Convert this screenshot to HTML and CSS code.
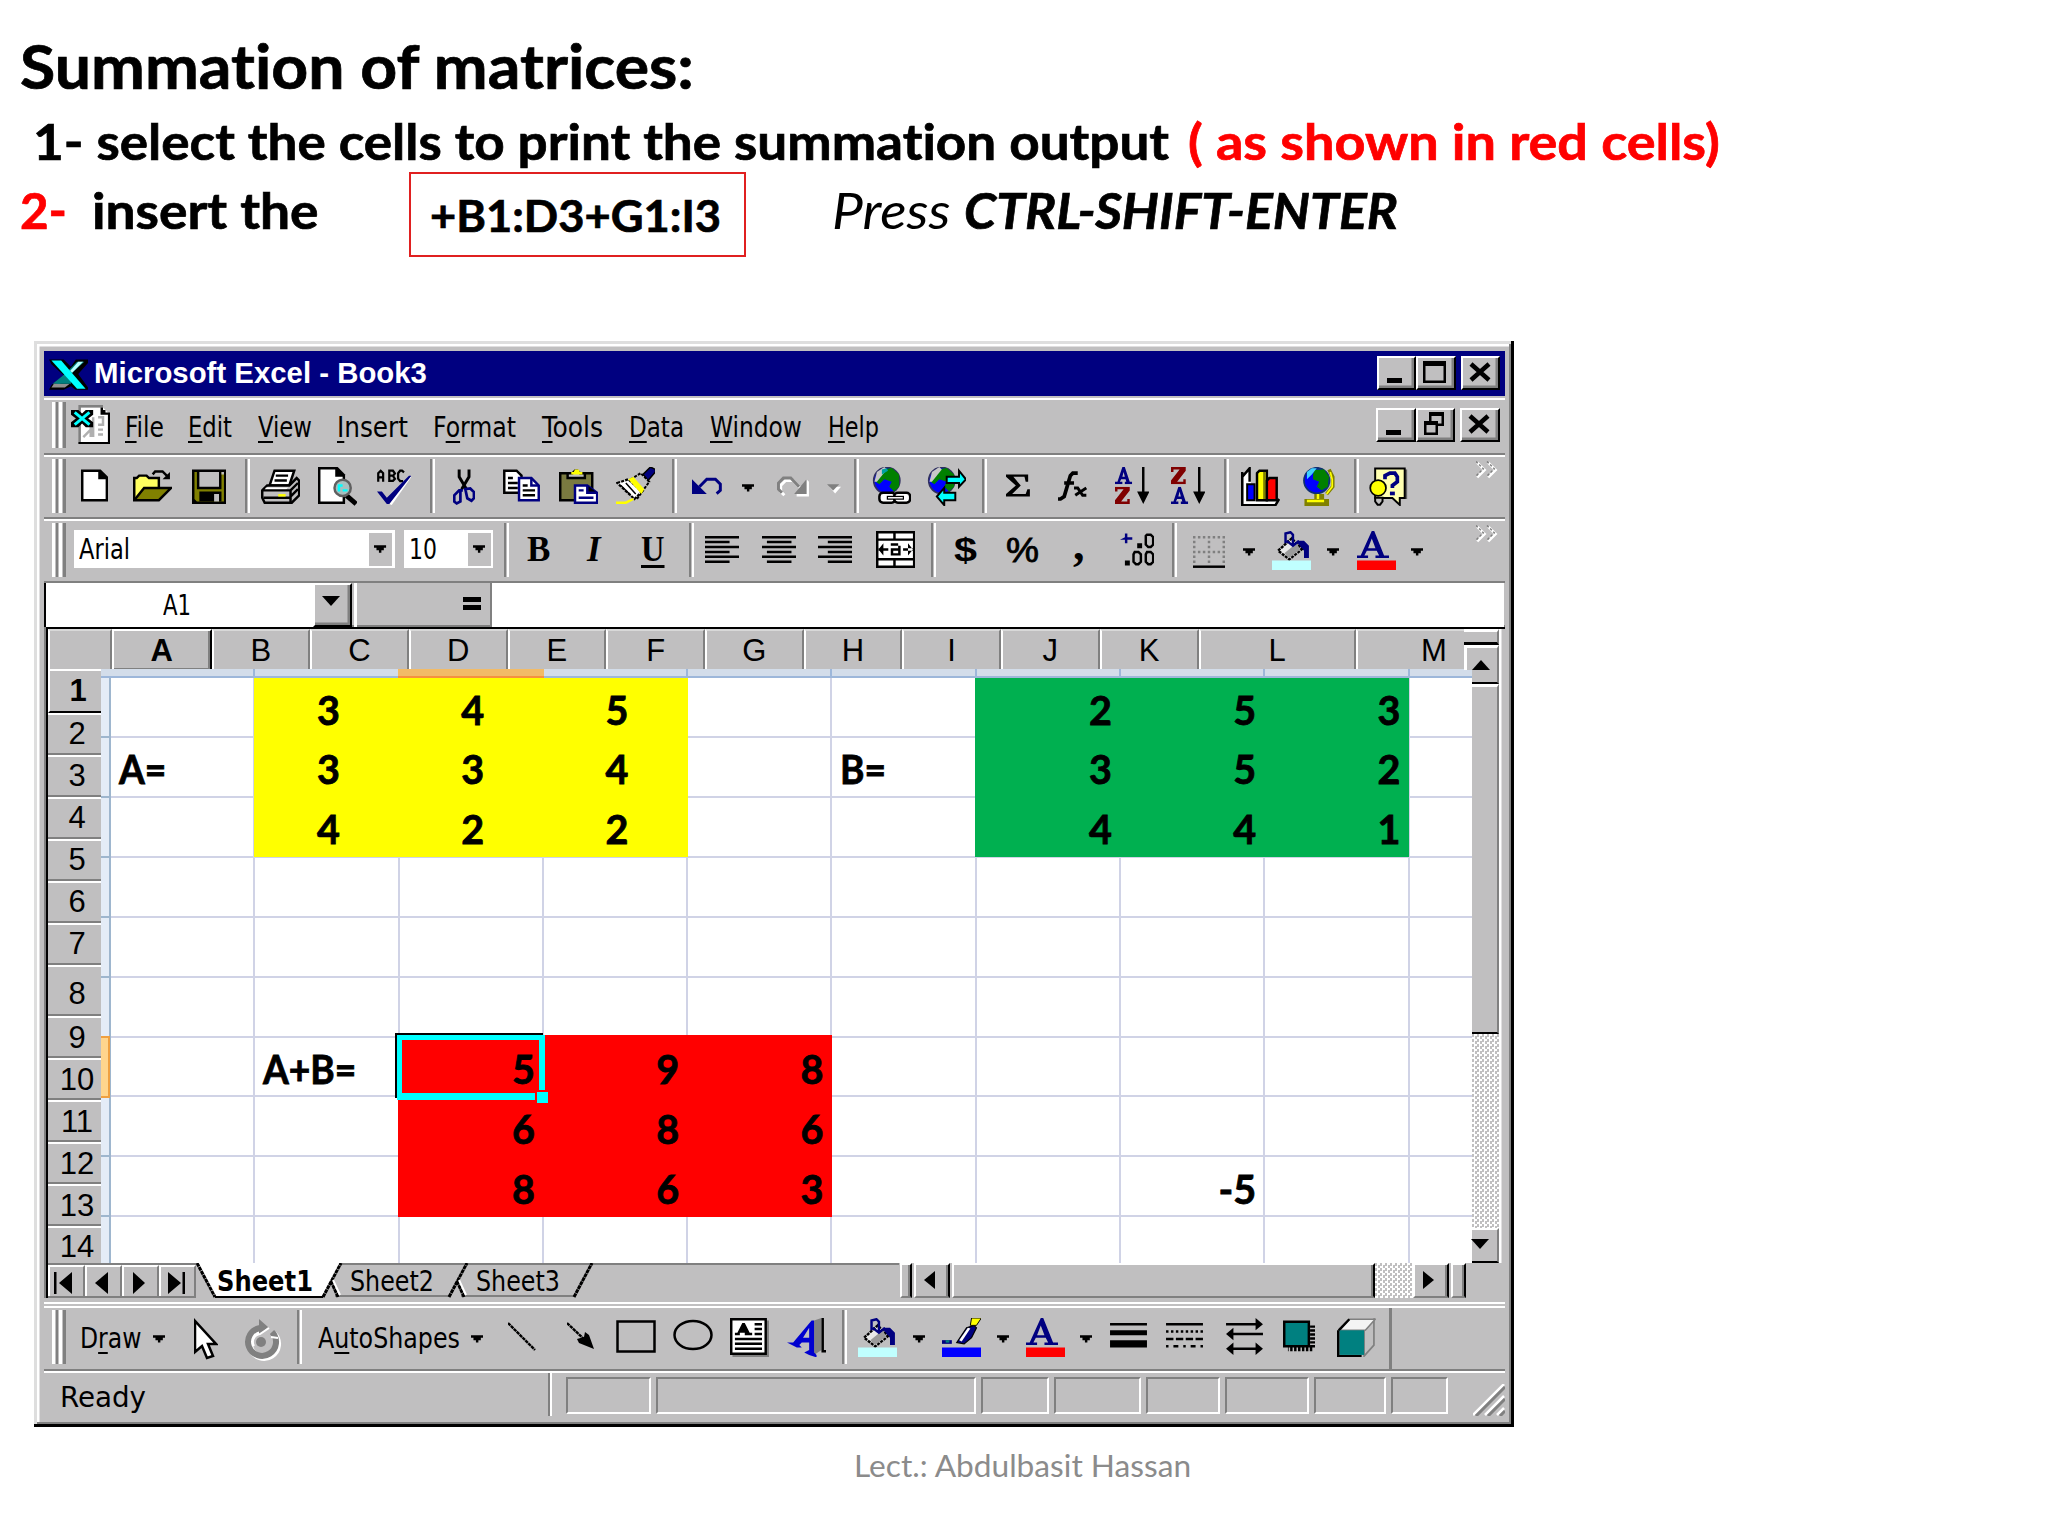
FILE: index.html
```html
<!DOCTYPE html>
<html lang="en">
<head>
<meta charset="utf-8">
<title>Summation of matrices</title>
<link rel="stylesheet" href="styles.css">
</head>
<body>
<svg width="0" height="0" class="defs">
  <defs>
    <symbol id="drop" viewBox="0 0 5 16"><path d="M0 7h5v1h-1v1h-1v1h-1v-1h-1v-1h-1z"/></symbol>
    <symbol id="chev" viewBox="0 0 9 7"><path fill="none" stroke="#fff" stroke-width="1.1" d="M.5 .5l3 3-3 3M5 .5l3 3-3 3"/><path fill="none" stroke="#808080" stroke-width=".6" stroke-dasharray="1 .8" d="M0 0l3 3-3 3M4.500 0l3 3-3 3"/></symbol>
    <symbol id="bucket" viewBox="0 0 16 16">
      <path fill="#000080" d="M10 4h3l2 2v5h-2V8l-2-2z"/>
      <path fill="#e8e8e8" stroke="#000" stroke-dasharray="1.200 .4" d="M2.500 8l5.500-5 4 4.500-5 4z"/>
      <path fill="#9a9a9a" d="M5 9l5-4 1.500 2.500-4.500 3.500z"/>
      <path fill="none" stroke="#000080" d="M5.500 5V1l2-.5 1 1V6M6 4l2.500 2L11 4"/>
      <path fill="#c0ffff" d="M0 12h16v4H0z"/>
    </symbol>
    <symbol id="fontcolor" viewBox="0 0 16 16">
      <path fill="#000080" fill-rule="evenodd" d="M6 0h1l4 10h2v1H7.500v-1H9L8 8H4l-1 2h1.500v1H0v-1h1.500zM6 3L4.500 7h3z"/>
      <path fill="#f00" d="M0 12h16v4H0z"/>
    </symbol>
    <symbol id="az-a" viewBox="0 0 7 7"><path fill="#000080" fill-rule="evenodd" d="M3 0h1l2 6h1v1H4V6h.6L4.300 5H2.500L2 6h1v1H0V6h1zM3.500 2L3 4h1z"/></symbol>
    <symbol id="az-z" viewBox="0 0 7 7"><path fill="#800000" d="M0 0h6v1.500L2.500 6H5V5h1v2H0V5.500L3.500 1H1v1H0z"/></symbol>
  </defs>
</svg>

<main class="slide">
  <header class="notes">
    <h1><span class="fit h-title">Summation of matrices:</span></h1>
    <p class="step-one"><span class="fit h-one">1- select the cells to print the summation output</span><span class="fit h-red">( as shown in red cells)</span></p>
    <p class="step-two">
      <span class="fit h-num">2-</span>
      <span class="fit h-ins">insert the</span>
      <span class="formula"><span class="fit h-formula">+B1:D3+G1:I3</span></span>
      <i class="fit h-press">Press</i>
      <i class="fit h-keys">CTRL-SHIFT-ENTER</i>
    </p>
  </header>

  <section class="window">
    <div class="titlebar">
      <svg class="app-icon" width="39" height="32" viewBox="0 0 16 13"><path fill="#000" d="M0 .5h6l3 3 2-3h5v1.500l-4 4.500 4 5.500v1h-5L9 11.500l-3 1.500H0l1-2 5-4-5-4.500z"/><path fill="#008080" d="M10.500 2.500l1-1h3L4.500 10.500H1.500l5-4z"/><path fill="#909090" d="M2 10.500h6.500l-2 1.500H1z"/><path fill="#008080" d="M5 8l2-1.500L9 9v1.500H3z"/><path fill="#0ff" d="M1 1h4l10 11.500h-3.500z"/><path fill="#b8ffff" d="M12 1.500h2L9.500 6l-.8-.8z"/></svg>
      <span class="fit app-name">Microsoft Excel - Book3</span>
      <div class="controls">
        <b><svg width="34" height="28" viewBox="0 0 34 28"><path d="M8 20h15v5H8z"/></svg></b>
        <b><svg width="34" height="28" viewBox="0 0 34 28"><path fill-rule="evenodd" d="M5 3h23v22H5zM7.500 8v14.500h18V8z"/></svg></b>
        <b class="close"><svg width="34" height="28" viewBox="0 0 34 28"><path fill="none" stroke="#000" stroke-width="4.500" d="M8 6l18 16M26 6L8 22"/></svg></b>
      </div>
    </div>

    <nav class="menubar">
      <i class="grip"></i>
      <svg class="doc-icon" width="39.400" height="39.400" viewBox="0 0 16 16"><path fill="#fff" d="M4 1h9l2 2v12H4z"/><path fill="#808080" d="M3 0h10v1H4v14H3z"/><path d="M12 1h1v1h1v1h2v13H3v-1h12V4h-3z"/><path fill="none" stroke="#b0b0b0" d="M6 8h2v5M9 5v8M11 5h2v3h-2M11 10h2M11 12h2M5 13l3-3"/><path d="M0 2h3l1.500 1.500L6 2h3v2L7 5.500 9 7v2H6L4.500 7.500 3 9H0V7l2-1.500L0 4z"/><path fill="none" stroke="#0ff" stroke-width="1.200" d="M1.500 3l6 5M7.500 3l-6 5"/></svg>
      <span class="fit m1"><u>F</u>ile</span>
      <span class="fit m2"><u>E</u>dit</span>
      <span class="fit m3"><u>V</u>iew</span>
      <span class="fit m4"><u>I</u>nsert</span>
      <span class="fit m5">F<u>o</u>rmat</span>
      <span class="fit m6"><u>T</u>ools</span>
      <span class="fit m7"><u>D</u>ata</span>
      <span class="fit m8"><u>W</u>indow</span>
      <span class="fit m9"><u>H</u>elp</span>
      <div class="controls">
        <b><svg width="34" height="28" viewBox="0 0 34 28"><path d="M8 20h15v5H8z"/></svg></b>
        <b><svg width="34" height="28" viewBox="0 0 34 28"><path fill-rule="evenodd" d="M11 2h15v14h-6v9H6V11h5zM13.500 6v5H20v2.500h3.500V6zM8.500 15v7.500h9V15z"/></svg></b>
        <b class="close"><svg width="34" height="28" viewBox="0 0 34 28"><path fill="none" stroke="#000" stroke-width="4.500" d="M8 6l18 16M26 6L8 22"/></svg></b>
      </div>
    </nav>

    <div class="bar standard">
      <i class="grip"></i>
      <svg width="27.100" height="39.400" viewBox="0 0 11 16"><path d="M0 1h8l3 3v10H0z"/><path fill="#fff" d="M1 2h6v3h3v8H1z"/></svg>
      <svg width="39.400" height="39.400" viewBox="0 0 16 16"><path fill="none" stroke="#000" d="M8 3l1-1.200h3l2 2"/><path d="M15 2v3h-3z"/><path fill="#ffff60" stroke="#000" d="M.5 13.500v-9h1l1-1h3l1 1h4v4"/><path fill="#808000" stroke="#000" d="M.5 13.500l4-5h11l-5 5z"/></svg>
      <svg width="34.400" height="39.400" viewBox="0 0 14 16"><path d="M0 1h14v14H0z"/><path fill="#808000" d="M1 2h12v12H2l-1-1z"/><path fill="#000" d="M2 2h10v7H2zM3 10h9v4H3z"/><path fill="#c0bfc0" d="M3 2h8v6H3zM9 11h2v3H9zM12 2h1v1h-1z"/></svg>
      <i class="sep"></i>
      <svg width="39.400" height="39.400" viewBox="0 0 16 16"><path fill="#fff" stroke="#000" d="M3.500 7.500l2-6h8l-2 6z"/><path stroke="#000" d="M6 3.500h5M5.500 5.500h5"/><path fill="#c0bfc0" stroke="#000" d="M.5 9.500l2-2h9l3-3 1 1v6l-3 3h-11l-1-2z"/><path fill="#fff" d="M2 8.300h9l-1 1H1.500z"/><path fill="none" stroke="#000" d="M.5 9.500h11.500v5M1 12.500h11M12 9.500l3-3M12 12l3-3"/><path fill="#ff0" d="M7 11h3v1H7z"/></svg>
      <svg width="39.400" height="39.400" viewBox="0 0 16 16"><path d="M0 0h8l3 3v12H0z"/><path fill="#fff" d="M1 1h6v3h3v10H1z"/><path stroke="#000" stroke-width="2" d="M11.500 11.500l4 3.500"/><circle cx="10" cy="8.500" r="3.300" fill="#a8c0c0" stroke="#606060"/><path fill="#0ff" d="M8 7h2v1H9v2H8zM10 9h2v1h-2z"/></svg>
      <svg width="34.400" height="39.400" viewBox="0 0 14 16"><path fill="none" stroke="#000" stroke-width=".9" d="M.5 6V2.500l1-1 1 1V6M.5 4.200h2M5 1.500V5.600h1.500l.8-.8-.8-1.200.8-1-.8-1.100zM5 3.500h1.500M11 2.200l-.8-.7h-.8l-.8 1v2.200l.8 1h1.200"/><path fill="#fff" d="M14 4L6 15.500l-1-.5L13 4z"/><path fill="#000080" d="M0 10h2l2 2.500L13 3.500h1L5 15H4z"/></svg>
      <i class="sep"></i>
      <svg width="22.200" height="39.400" viewBox="0 0 9 16"><path fill="none" stroke="#000" stroke-width="1.200" d="M2.500 1v3l3 5M6.500 1v3l-3 5"/><path fill="none" stroke="#000080" stroke-width="1.100" d="M4 9.500H2.500l-2 2v2.500l1 .8 1.500-.8V9.500M5 9l2-.3 1.500 1.500v2.500l-1 1-1.700-1z"/></svg>
      <svg width="37" height="39.400" viewBox="0 0 15 16"><path fill="#fff" stroke="#000" d="M.5 1.500h5l2 2v7h-7z"/><path stroke="#000" d="M2 4.500h2M2 6.500h4M2 8.500h4"/><path fill="#fff" stroke="#000080" d="M6.500 4.500h5l3 3v6h-8z"/><path fill="none" stroke="#000080" d="M11.500 4.500v3h3"/><path stroke="#000" d="M8 7.500h2M8 9.500h5M8 11.500h5"/></svg>
      <svg width="39.400" height="39.400" viewBox="0 0 16 16"><path fill="#7a7a40" stroke="#000" d="M.5 2.500h13v11H.5z"/><path fill="#c0bfc0" stroke="#000" d="M3.500 4.500v-2h2l1-1h1l1 1h2v2z"/><path fill="#ff0" d="M5 2h1l.5-1h1.500l.5 1h1v1H5z"/><path fill="#fff" stroke="#000080" d="M6.500 7.500h5l4 3v4h-9z"/><path stroke="#000080" d="M8 9.500h2M8 12.500h6M11.500 7.500v3h4"/></svg>
      <svg width="39.400" height="39.400" viewBox="0 0 16 16"><path fill="#000080" stroke="#000" stroke-width=".6" d="M11 3l3-3 2 1v1l-3 3.500z"/><path fill="#c0bfc0" stroke="#000" stroke-width=".8" stroke-dasharray="1.200 .5" d="M6 5l4-2.500 3.500 3.500-5 7z"/><path fill="#fff" stroke="#000" stroke-dasharray="1.200 .5" stroke-width=".9" d="M.5 6.500L5 5l5.500 5-3 3z"/><path fill="#ff0" d="M5 5l2-1 4.500 5-1.200 2z"/><path fill="none" stroke="#000" stroke-width=".6" d="M2 7.500l4 4M4 6.500l4 4.500"/><path fill="none" stroke="#ff0" d="M0 14.500h4l3-1.500"/></svg>
      <i class="sep"></i>
      <svg width="29.600" height="39.400" viewBox="0 0 12 16"><path fill="#000080" d="M0 5v6h6z"/><path fill="none" stroke="#000080" stroke-width="1.200" d="M3 8l3-3h3.500l2 2v2.500l-1.500 1.300"/></svg>
      <svg width="12.300" height="39.400"><use href="#drop"/></svg>
      <svg width="34.400" height="39.400" viewBox="0 0 14 16"><path fill="#fff" d="M13 6v6H8v-1h4V5z"/><path fill="none" stroke="#fff" stroke-width="1.200" d="M3 11.500L1.500 10V7.500l2-2h3l3 3"/><path fill="#808080" d="M12 5v6H7z"/><path fill="none" stroke="#808080" stroke-width="1.200" d="M2 10.500L.6 9V6.500l2-2h3L9 8"/></svg>
      <svg width="14" height="39.400" viewBox="0 0 5.700 16"><path fill="#fff" d="M1 8h4.700L3.300 10.800z"/><path fill="#808080" d="M0 7h5L2.500 9.500z"/></svg>
      <i class="sep"></i>
      <svg width="39.400" height="39.400" viewBox="0 0 16 16"><circle cx="6" cy="5.500" r="5.300" fill="#00f" stroke="#303060" stroke-width=".7"/><path fill="#008000" d="M4 1l4-.6 3 2.600v5L9 10l-2-2 1-2-3-1-2 2-1.500-1z"/><path fill="#c8c8c8" d="M2 2l3-2 1 1-4 5H1z"/><path fill="#00a0a0" d="M4 1l2-.5.5 1L4 3z"/><rect x="3" y="10.500" width="6.500" height="4" rx="1.500" fill="#fff" stroke="#000"/><rect x="9" y="10.500" width="6.500" height="4" rx="1.500" fill="#fff" stroke="#000"/><path stroke="#000" stroke-width="1.600" d="M6 12.500h7"/><path stroke="#fff" stroke-width=".6" d="M6.500 12.500h6"/></svg>
      <svg width="39.400" height="39.400" viewBox="0 0 16 16"><circle cx="6" cy="5.500" r="5.300" fill="#00f" stroke="#303060" stroke-width=".7"/><path fill="#008000" d="M4 1l4-.6 3 2.600v5L9 10l-2-2 1-2-3-1-2 2-1.500-1z"/><path fill="#c8c8c8" d="M2 2l3-2 1 1-4 5H1z"/><path fill="#0ff" stroke="#000" stroke-width=".8" d="M8 4h5V1.500L15.800 5 13 8V6.500H8z"/><path fill="#0ff" stroke="#000" stroke-width=".8" d="M11.500 10.500H7V8.500L4 12l3 3.500v-2h4.500z"/></svg>
      <i class="sep"></i>
      <svg width="24" height="39.400" viewBox="0 0 9.750 16"><path d="M0 3h9v3H8L7.500 4H3l3 3.500L2.500 11H8l.7-2h1v3H0v-1l4-3.500L0 4z"/></svg>
      <svg width="29.600" height="39.400" viewBox="0 0 12 16"><path fill="none" stroke="#000" stroke-width="1.500" d="M0 13h1l1.500-1L5 3.500 6 2.500h2M2.500 6.500h4"/><path fill="none" stroke="#000" stroke-width="1.200" d="M6.500 8.500h1.500l2 3h1.500M11.500 8.500L7 11.500"/></svg>
      <svg width="34.400" height="39.400" viewBox="0 0 14 16"><use href="#az-a" width="7" height="7"/><use href="#az-z" y="8" width="7" height="7"/><path d="M11 0h1v10h2l-2.500 5L9 10h2z"/></svg>
      <svg width="34.400" height="39.400" viewBox="0 0 14 16"><use href="#az-z" width="7" height="7"/><use href="#az-a" y="8" width="7" height="7"/><path d="M11 0h1v10h2l-2.500 5L9 10h2z"/></svg>
      <i class="sep"></i>
      <svg width="39.400" height="39.400" viewBox="0 0 16 16"><path fill="#fff" d="M1 4l3-3v12h12l-2 2H1z"/><path fill="none" stroke="#000" d="M.5 2v13.500H14l1.500-2.500M.5 4L3.500.5V6"/><path fill="#00f" stroke="#000" stroke-width=".8" d="M2.500 7h3v6.500h-3z"/><path fill="#ff0" stroke="#000" d="M6.500 2.500l1-1h3v12h-4z"/><path fill="#808000" d="M9 2h1v11H9z"/><path fill="#f00" stroke="#000" d="M10.500 5.500l1-1h3v9h-4z"/></svg>
      <svg width="34.400" height="39.400" viewBox="0 0 14 16"><path fill="none" stroke="#808000" stroke-width="1.500" d="M11 1l1.500 3v4L10 11"/><path fill="none" stroke="#ff0" stroke-width=".7" d="M11.500 2l.8 3v3L10 11"/><circle cx="6" cy="5.500" r="5.200" fill="#00f" stroke="#103070" stroke-width=".7"/><path fill="#008000" d="M5 1l4 0 2 3-.5 4L8 9.500 6 8l1-2-2.500-1V3z"/><path fill="#40d0ff" d="M2 2l2-1.500h2L4 3 2 5z"/><path fill="#808000" d="M5 11h4v2h2v3H1v-3h4z"/><path fill="#ff0" d="M2 13.300h7v1H2zM6 11h1v2H6z"/></svg>
      <i class="sep"></i>
      <svg width="39.400" height="39.400" viewBox="0 0 16 16"><path fill="#606060" d="M14 1h1.500v12H14z"/><path fill="#ffffb0" stroke="#000" stroke-width=".8" d="M2.500.6h12v12h-2v2.800l-3-2.800h-7z"/><path fill="none" stroke="#000080" stroke-width="1.500" d="M6.500 5V3.500l2-1h2l1 1.500v2l-2 1.500v1"/><path fill="#000080" d="M8.500 10h2v1.500h-2z"/><circle cx="3.700" cy="8.500" r="3.200" fill="#ff0" stroke="#000" stroke-width=".7"/><path fill="#c0bfc0" stroke="#000" stroke-width=".8" d="M2.500 12.500h3v1.500l-1 1.300h-1l-1-1.300z"/></svg>
      <svg class="more" width="22" height="18"><use href="#chev"/></svg>
    </div>

    <div class="bar format">
      <i class="grip"></i>
      <div class="combo font-name"><span class="fit f-arial">Arial</span><em><svg width="12.300" height="33" viewBox="0 2 5 13.400"><use href="#drop" width="5" height="16"/></svg></em></div>
      <div class="combo font-size"><span class="fit f-ten">10</span><em><svg width="12.300" height="33" viewBox="0 2 5 13.400"><use href="#drop" width="5" height="16"/></svg></em></div>
      <i class="sep"></i>
      <b class="glyph">B</b>
      <b class="glyph italic">I</b>
      <b class="glyph under">U</b>
      <i class="sep"></i>
      <svg width="34.400" height="39.400" viewBox="0 0 14 16"><path d="M0 2h14v1H0zM0 4h10v1H0zM0 6h14v1H0zM0 8h10v1H0zM0 10h14v1H0zM0 12h10v1H0z"/></svg>
      <svg width="34.400" height="39.400" viewBox="0 0 14 16"><path d="M0 2h14v1H0zM2 4h10v1H2zM0 6h14v1H0zM2 8h10v1H2zM0 10h14v1H0zM2 12h10v1H2z"/></svg>
      <svg width="34.400" height="39.400" viewBox="0 0 14 16"><path d="M0 2h14v1H0zM4 4h10v1H4zM0 6h14v1H0zM4 8h10v1H4zM0 10h14v1H0zM4 12h10v1H4z"/></svg>
      <svg width="39.400" height="39.400" viewBox="0 0 16 16"><path d="M0 0h16v15H0z"/><path fill="#fff" d="M1 1h6v2H1zM8 1h7v2H8zM1 4h14v7H1zM1 12h6v2H1zM8 12h7v2H8z"/><path d="M1 7h4v1H1zM3 5v5L1 7.500zM11 7h4v1h-4zM13 5v5l2-2.500z"/><path fill-rule="evenodd" d="M6 5h3v1H6zM9 6h1v4H6V7h3zM7 8v1h2V8z"/></svg>
      <i class="sep"></i>
      <b class="glyph sans dollar">$</b>
      <b class="glyph sans percent">%</b>
      <b class="glyph comma">,</b>
      <svg width="34.400" height="39.400" viewBox="0 0 14 16"><path fill="#000080" d="M2 1h1v1.500h2v1H3V5H2V3.500H0L2 2.500z"/><path d="M7 5h2v2H7zM2 12h2v2H2z"/><path fill="none" stroke="#000" d="M10.500 2l.5-.5h1.500l1 1v3l-1 1h-1l-1-1zM5.500 9.500l.5-1h1.500l1 1v3l-1 1h-1l-1-1zM10.500 9.500l.5-1h1.500l1 1v3l-1 1h-1l-1-1z"/></svg>
      <i class="sep"></i>
      <svg width="32" height="39.400" viewBox="0 0 13 16"><path fill="none" stroke="#808080" stroke-dasharray="1 1" d="M0 2.500h13M0 8.500h13M.5 2v12M6.500 2v12M12.500 2v12"/><path d="M0 14h13v1H0z"/></svg>
      <svg width="12.300" height="39.400"><use href="#drop"/></svg>
      <svg width="39.400" height="39.400"><use href="#bucket"/></svg>
      <svg width="12.300" height="39.400"><use href="#drop"/></svg>
      <svg width="39.400" height="39.400"><use href="#fontcolor"/></svg>
      <svg width="12.300" height="39.400"><use href="#drop"/></svg>
      <svg class="more" width="22" height="18"><use href="#chev"/></svg>
    </div>

    <div class="formula-bar">
      <div class="name-box"><span class="fit f-a1">A1</span></div>
      <div class="name-drop"><svg width="18" height="10" viewBox="0 0 18 10"><path d="M0 0h18l-9 10z"/></svg></div>
      <div class="equals"><i></i></div>
      <div class="entry"></div>
    </div>

    <div class="book">
      <div class="book-main">
        <div class="sheet-side">
          <div class="col-heads">
            <span></span><span class="on">A</span><span>B</span><span>C</span><span>D</span><span>E</span><span>F</span><span>G</span><span>H</span><span>I</span><span>J</span><span>K</span><span>L</span><span class="last">M</span>
          </div>
          <div class="sheet-row">
            <div class="row-heads">
              <span class="on">1</span><span>2</span><span>3</span><span>4</span><span>5</span><span>6</span><span>7</span><span class="tall">8</span><span>9</span><span>10</span><span>11</span><span>12</span><span>13</span><span>14</span>
            </div>
            <div class="sheet">
              <div class="top-strip"><i></i></div>
              <div class="left-strip"><i></i></div>
              <div class="cells">
                <span class="label a">A=</span>
                <div class="range yellow"><span>3</span><span>4</span><span>5</span><span>3</span><span>3</span><span>4</span><span>4</span><span>2</span><span>2</span></div>
                <span class="label b">B=</span>
                <div class="range green"><span>2</span><span>5</span><span>3</span><span>3</span><span>5</span><span>2</span><span>4</span><span>4</span><span>1</span></div>
                <span class="label sum">A+B=</span>
                <div class="range red"><span>5</span><span>9</span><span>8</span><span>6</span><span>8</span><span>6</span><span>8</span><span>6</span><span>3</span></div>
                <span class="label minus">-5</span>
                <div class="selection"><i></i></div>
              </div>
            </div>
          </div>
        </div>
        <div class="vscroll">
          <div class="vsplit"></div>
          <div class="vbtn up"><svg width="18" height="10" viewBox="0 0 18 10"><path d="M0 10h18L9 0z"/></svg></div>
          <div class="vthumb"></div>
          <div class="dither"></div>
          <div class="vbtn down"><svg width="18" height="10" viewBox="0 0 18 10"><path d="M0 0h18l-9 10z"/></svg></div>
        </div>
      </div>
      <div class="tabs">
        <div class="tab-nav">
          <b><svg width="18" height="22" viewBox="0 0 18 22"><path d="M0 0h2.500v22H0zM18 0v22L5 11z"/></svg></b>
          <b><svg width="18" height="22" viewBox="0 0 18 22"><path d="M17 0v22L4 11z"/></svg></b>
          <b><svg width="18" height="22" viewBox="0 0 18 22"><path d="M5 0v22l12-11z"/></svg></b>
          <b><svg width="20" height="22" viewBox="0 0 20 22"><path d="M3 0v22l13-11zM17.500 0H20v22h-2.500z"/></svg></b>
        </div>
        <div class="tab-list">
          <svg class="tab-edges" width="703" height="35" viewBox="197 0 703 35"><path fill="#fff" d="M197 0l19 34h108l18-34z"/><path fill="none" stroke="#808080" stroke-width="2" d="M342 1h558M336 33h114M462 33h113"/><path fill="none" stroke="#000" stroke-width="3" stroke-dasharray="4 .5" d="M198 0l18 34M324 34l18-34M332 18l7 16M450 34l18-34M458 18l7 16M575 34l18-34"/><path stroke="#000" stroke-width="2" d="M216 34h108"/><path fill="none" stroke="#fff" stroke-width="2" d="M334 17l7 15M460 17l7 15"/></svg>
          <span class="fit tab-one">Sheet1</span>
          <span class="fit tab-two">Sheet2</span>
          <span class="fit tab-three">Sheet3</span>
        </div>
        <div class="hscroll">
          <i class="hsplit"></i>
          <i class="hbtn"><svg width="11" height="18" viewBox="0 0 11 18"><path d="M11 0v18L0 9z"/></svg></i>
          <i class="hthumb"></i>
          <i class="dither"></i>
          <i class="hbtn"><svg width="11" height="18" viewBox="0 0 11 18"><path d="M0 0v18l11-9z"/></svg></i>
          <i class="hend"></i>
        </div>
      </div>
    </div>
    <div class="gap"></div>

    <div class="bar drawing">
      <i class="grip"></i>
      <span class="fit d-draw">D<u>r</u>aw</span>
      <svg width="12.300" height="39.400"><use href="#drop"/></svg>
      <svg width="24" height="44" viewBox="0 0 24 44"><path fill="#fff" stroke="#000" stroke-width="2.500" d="M1 3v31l7-6 5 12 6-2-5-12h8z"/></svg>
      <svg width="39" height="44" viewBox="0 0 39 44"><path fill="none" stroke="#fff" stroke-width="6" d="M31 16a14 14 0 1 1-12-4"/><path fill="none" stroke="#808080" stroke-width="6" d="M29 14a14 14 0 1 1-12-4"/><path fill="#808080" d="M16 1l9 8-9 8z"/><path fill="none" stroke="#fff" stroke-width="2" d="M11 28a8 8 0 0 1 6-12l9-6M28 19l7 1"/><circle cx="18" cy="24" r="5" fill="#808080"/></svg>
      <i class="sep"></i>
      <span class="fit d-auto">A<u>u</u>toShapes</span>
      <svg width="12.300" height="39.400"><use href="#drop"/></svg>
      <svg width="29" height="39.400" viewBox="0 0 29 39.400"><path stroke="#000" stroke-width="2.400" stroke-dasharray="3.500 .6" d="M0 5l27 27"/></svg>
      <svg width="29" height="39.400" viewBox="0 0 29 39.400"><path stroke="#000" stroke-width="2.400" stroke-dasharray="3.500 .6" d="M0 5l20 19"/><path d="M18 14l4 3 5 14-15-6-2-4 7-2z"/></svg>
      <svg width="40" height="39.400" viewBox="0 0 40 39.400"><path fill="none" stroke="#000" stroke-width="2.500" d="M1.500 3.500h37v30h-37z"/></svg>
      <svg width="40" height="39.400" viewBox="0 0 40 39.400"><ellipse cx="20" cy="17" rx="18.500" ry="14" fill="none" stroke="#000" stroke-width="2.500"/></svg>
      <svg width="39.400" height="39.400" viewBox="0 0 16 16"><path fill="#808080" d="M1 1h15v15H1z"/><path d="M0 0h15v15H0z"/><path fill="#fff" d="M1 1h13v13H1z"/><path fill-rule="evenodd" d="M5 2h1l2 4h1v1H6V6H4v1H2V6h1zM10 2h3v1h-3zM10 4h3v1h-3zM10 6h3v1h-3zM2 8h11v1H2zM2 10h11v1H2zM2 12h11v1H2z"/></svg>
      <svg width="39.400" height="39.400" viewBox="0 0 16 16"><path fill="#808080" d="M11 1l3-1v13l-3 2z"/><path d="M14 0h1v13h1v1h-2z"/><path fill="#0000d0" fill-rule="evenodd" d="M10 1h1v13l1 1v1l-3-1-2-1 2-1v-3H6l-1 1 1 1H4l-4-2h2.500zM9 4L6.500 8H9z"/></svg>
      <i class="sep"></i>
      <svg width="39.400" height="39.400"><use href="#bucket"/></svg>
      <svg width="12.300" height="39.400"><use href="#drop"/></svg>
      <svg width="39.400" height="39.400" viewBox="0 0 16 16"><path fill="#000080" stroke="#000" stroke-width=".5" d="M6 10l4-6 3-1 1 1-2 4-3 2.500z"/><path fill="#fff" d="M7 9l3.500-5 1 .3L8 9.500z"/><path fill="#ff0" stroke="#000" stroke-width=".4" d="M12 0h4l-2 3h-2.500z"/><path fill="#000080" d="M0 9h4v1.500H0z"/><path fill="#008080" d="M1.500 9H3v1H1.500z"/><path fill="#00f" d="M0 12h16v4H0z"/></svg>
      <svg width="12.300" height="39.400"><use href="#drop"/></svg>
      <svg width="39.400" height="39.400"><use href="#fontcolor"/></svg>
      <svg width="12.300" height="39.400"><use href="#drop"/></svg>
      <svg width="37" height="39.400" viewBox="0 0 15 16"><path d="M0 2h15v1H0zM0 5h15v2H0zM0 9h15v3H0z"/></svg>
      <svg width="37" height="39.400" viewBox="0 0 15 16"><path d="M0 2h15v1H0z"/><path fill="none" stroke="#000" stroke-dasharray="1 1" d="M0 5.500h15"/><path fill="none" stroke="#000" stroke-dasharray="3 1" d="M0 8.500h15"/><path fill="none" stroke="#000" stroke-dasharray="1 2 2 2" d="M0 11.500h15"/></svg>
      <svg width="37" height="39.400" viewBox="0 0 15 16"><path d="M0 2h12V0l3 2.500-3 2.500V3H0zM15 6H3V4L0 6.500 3 9V7h12zM3 12h9v-2l3 2.500-3 2.500v-2H3v2l-3-2.500L3 10z"/></svg>
      <svg width="32" height="39.400" viewBox="0 0 13 16"><path fill="none" stroke="#000" stroke-width="2" stroke-dasharray="1 .6" d="M12 3v9.500H2"/><path fill="#008080" stroke="#000" d="M.5 1.500h10v10H.5z"/></svg>
      <svg width="39.400" height="39.400" viewBox="0 0 16 16"><path fill="#c0bfc0" stroke="#808080" stroke-width=".7" d="M11 5l4-4.500V11l-4 4.500z"/><path fill="#f4f4f4" stroke="#808080" stroke-width=".6" d="M1 5l4-4.500h10.500L11.500 5z"/><path stroke="#000" d="M.7 5L5 .5"/><path fill="#008080" d="M1 5h10v10H1z"/><path d="M0 5h1v10h9v1H0z"/></svg>
      <i class="bar-end"></i>
    </div>

    <footer class="status">
      <span class="fit s-ready">Ready</span>
      <i class="pane-end"></i>
      <i class="pane"></i><i class="pane"></i><i class="pane"></i><i class="pane"></i><i class="pane"></i><i class="pane"></i><i class="pane"></i><i class="pane"></i>
      <svg width="32" height="32" viewBox="0 0 32 32"><path stroke="#fff" stroke-width="2.500" d="M0 31L31 0M12 31l19-19M24 31l7-7"/><path stroke="#808080" stroke-width="3" d="M3 32L32 3M15 32l17-17M27 32l5-5"/></svg>
    </footer>
  </section>

  <p class="credit"><span class="fit c-lect">Lect.: Abdulbasit Hassan</span></p>
</main>
</body>
</html>
```
FILE: styles.css
```css
* { box-sizing: border-box; }
body { margin: 0; background: #fff; color: #000; }
.defs { display: block; position: absolute; }
svg { display: block; flex: none; }
i, em { font-style: normal; }
u { text-decoration-thickness: 2px; text-underline-offset: 4px; }

.slide { width: 2048px; height: 1536px; overflow: hidden; font-family: Lato, Carlito, sans-serif; font-variant-ligatures: none; }
.fit { display: inline-block; transform-origin: 0 50%; white-space: nowrap; justify-self: start; }

/* Heading block */
.notes { height: 341px; padding-top: 25px; }
.notes h1, .notes p { margin: 0; font-weight: 700; white-space: nowrap; -webkit-text-stroke: 0.7px; }
.notes h1 { padding-left: 20px; font-size: 61px; line-height: 81px; }
.notes p { font-size: 50px; line-height: 71px; }
.step-one { display: grid; grid-template-columns: 1155px auto; padding-left: 33px; height: 69px; }
.step-two { display: grid; grid-template-columns: 72px 316px 424px 132px auto; padding-left: 20px; height: 69px; }
.h-title { transform: scaleX(1.055); }
.h-one { transform: scaleX(1.061); }
.h-red, .h-num { color: #f00; }
.h-red { transform: scaleX(1.08); }
.h-num { transform: scaleX(0.986); }
.h-ins { transform: scaleX(1.066); }
.formula { width: 337px; height: 85px; margin: -3px 0 0 1px; padding-left: 19px; border: 2px solid #e02020; font-size: 44.500px; line-height: 81px; }
.h-formula { transform: scaleX(1.016); }
.step-two i { font-style: italic; line-height: 70px; }
.step-two .h-press { font-weight: 400; transform: scaleX(1.1); -webkit-text-stroke: 0; }
.h-keys { transform: scaleX(1.037); }

/* Window frame */
.window {
  width: 1480px; height: 1086px; margin-left: 34px; padding: 10px 9px 3px 10px;
  background: #c0bfc0; font-family: "DejaVu Sans Condensed", "DejaVu Sans", sans-serif; font-stretch: condensed; font-size: 27.500px;
  box-shadow: inset -3px -3px #000, inset 3px 3px #dedede, inset -5px -5px #808080, inset 5.500px 5.500px #fff;
}
.titlebar { display: flex; height: 45px; margin-bottom: 2px; background: #000080; color: #fff; }
.app-icon { margin: 7px 0 0 5px; }
.app-name { margin-left: 6px; font: 700 30px/44px "Liberation Sans", Arial, sans-serif; transform: scaleX(0.979); }
.controls { display: flex; }
.titlebar .controls { margin: 5px 5px 0 auto; }
.controls b { width: 39.500px; height: 34px; border: 2.500px solid; border-color: #fff #000 #000 #fff; background: #c0bfc0; box-shadow: inset -2.500px -2.500px #808080; }
.controls .close { margin-left: 5px; }

.menubar {
  display: grid; grid-template-columns: 19px 54px 63px 70px 79px 96px 109px 87px 81px 118px 548px auto;
  height: 57px; padding-left: 8px; border-top: 2.500px solid #fff; border-bottom: 2px solid #808080; line-height: 54px;
}
.menubar .controls { margin-top: 8px; }
.m1 { transform: scaleX(0.946); }
.m2 { transform: scaleX(0.918); }
.m3 { transform: scaleX(0.92); }
.m5 { transform: scaleX(0.954); }
.m6 { transform: scaleX(1.009); }
.m7 { transform: scaleX(0.931); }
.m8 { transform: scaleX(0.943); }
.m9 { transform: scaleX(0.904); }
.doc-icon { margin-top: 5px; }
.grip { width: 14px; height: 54px; margin-top: 2px; background: linear-gradient(90deg, #fff 0 3px, #c0bfc0 3px 4px, #808080 4px 6.500px, #c0bfc0 6.500px 7px, #fff 7px 10px, #c0bfc0 10px 11px, #808080 11px 14px); }
.menubar .grip { height: 46px; }
.sep { width: 5px; height: 54px; margin-top: 2px; border-left: 2px solid #808080; border-right: 2.500px solid #fff; }

.bar { display: grid; padding-left: 8px; border-top: 2.500px solid #fff; border-bottom: 2px solid #808080; }
.bar > svg { margin-top: 10px; }
.bar > .more { margin-top: 4px; }
.standard { height: 64px; grid-template-columns: 28.500px 52px 59px 53px 16px 57px 59px 53.500px 23px 50px 56px 57px 56px 20px 50px 34.500px 50px 27.500px 17.500px 55.500px 55px 23.500px 52px 57.500px 56px 53px 17px 61px 51.500px 15.500px 106.500px auto; }
.format { height: 64px; grid-template-columns: 21.500px 330.500px 100px 23px 57px 56.500px 48.500px 16px 56.500px 56.500px 57.500px 55px 23.500px 53.500px 65.500px 47px 52px 21px 50px 29px 54.500px 30px 54.500px 64.500px auto; }
.combo { display: flex; justify-content: space-between; height: 38px; margin-top: 9px; padding: 2.500px 2.500px 2.500px 5px; background: #fff; line-height: 33px; }
.combo em { display: flex; justify-content: center; width: 23px; background: #c0bfc0; }
.font-name { width: 321px; }
.font-size { width: 89px; }
.f-arial { transform: scaleX(0.911); }
.f-ten { transform: scaleX(0.889); }
.f-a1 { transform: scaleX(0.857); }
.glyph { font: 700 35px/58px "Liberation Serif", serif; }
.italic { font-style: italic; padding-left: 3px; }
.under { text-decoration: underline; text-decoration-thickness: 2.500px; text-underline-offset: 4px; transform: scaleX(0.93); transform-origin: 0 0; }
.sans { font-family: "Liberation Sans", sans-serif; }
.dollar { transform: scaleX(1.25); transform-origin: 0 0; font-size: 33px; }
.percent { font-weight: 400; -webkit-text-stroke: 0.8px; transform: scaleX(1.06); }
.comma { font-size: 46px; line-height: 48px; }

.formula-bar { display: grid; grid-template-columns: 268.500px 39.500px 140px 1fr; height: 44px; border-bottom: 2px solid #808080; }
.name-box { padding-left: 117px; border-left: 2.500px solid #000; background: #fff; line-height: 44px; }
.name-drop { border: 2.500px solid; border-color: #fff #000 #000 #fff; box-shadow: inset -2.500px -2.500px #808080; padding: 11px 0 0 7px; }
.equals { margin-left: 2px; padding: 14px 0 0 106px; border-left: 3px solid #fff; border-right: 2px solid #808080; }
.equals i { display: block; width: 18px; height: 13px; border: solid #000; border-width: 5px 0; }
.entry { background: #fff; margin-right: 1px; }

/* Workbook */
.book { height: 671px; border-left: 2.500px solid #808080; }
.book-main { display: flex; height: 636px; border: solid #000; border-width: 2.500px 0 0 2.500px; }
.sheet-side { width: 1424px; }
.col-heads { display: grid; grid-template-columns: 64px 99.500px 98.700px 98.700px 98.700px 98.700px 98.700px 98.700px 98.700px 98.700px 98.700px 99px 157px auto; height: 39.500px; font: 31px/39px "Liberation Sans", sans-serif; text-align: center; }
.col-heads span { border-left: 2.500px solid #fff; border-top: 2px solid #d8d8d8; border-right: 2px solid #808080; }
.col-heads .on { font-weight: 700; border-top-color: #fff; border-right: 2.500px solid #000; box-shadow: inset -2px -2px #808080; }
.col-heads .last { padding-left: 38px; border-right: 0; }
.sheet-row { display: flex; height: 594px; }
.row-heads { display: grid; grid-template-rows: 44px 42px 42px 42px 42px 42px 42px 51.500px 42px 42px 42px 42px 42px 36.500px; width: 53px; font: 31px/40px "Liberation Sans", sans-serif; }
.row-heads span { display: flex; align-items: center; justify-content: center; overflow: hidden; padding: 1.500px 4px 0 9px; border-top: 2.500px solid #fff; border-bottom: 2px solid #808080; }
.row-heads .on { font-weight: 700; border-bottom: 2.500px solid #000; border-left: 2px solid #fff; }
.row-heads .tall { padding-top: 8px; }
.row-heads span:last-child { padding-top: 4px; border-bottom: 0; }

.sheet { display: grid; grid-template: 9px 585px / 10px 1361px; background: #fff; }
.top-strip { grid-column: 1 / 3; padding-left: 297px; background: repeating-linear-gradient(90deg, transparent 0 142.300px, #9db7da 142.300px 144.280px) 10px 0 / 100% 100% no-repeat, #d3ddea; border-bottom: 2px solid #9db7da; }
.top-strip i { display: block; width: 146px; height: 9px; background: #f2bb67; border-bottom: 2px solid #f5913f; }
.left-strip { padding-top: 358px; border-right: 2px solid #9eb6ce; background: repeating-linear-gradient(#e4ecf7 0 57.900px, #9eb6ce 57.900px 59.920px); }
.left-strip i { display: block; width: 9px; height: 62px; border: 2px solid #f0a040; border-left: 0; background: #ffd58d; }
.cells {
  position: relative; overflow: hidden; display: grid; grid-template-rows: repeat(9, 59.920px) auto; grid-template-columns: repeat(9, 144.280px) auto;
  background: repeating-linear-gradient(transparent 0 57.900px, #d0d3e6 57.900px 59.920px), repeating-linear-gradient(90deg, transparent 0 142.300px, #d0d3e6 142.300px 144.280px);
  font: 700 39.500px/63px Lato, sans-serif; -webkit-text-stroke: 0.8px;
}
.label { white-space: nowrap; margin: 0 9px 0 8px; transform-origin: 0 0; transform: scaleX(0.94); }
.a { grid-area: 2 / 1; }
.b { grid-area: 2 / 6; }
.sum { grid-area: 7 / 2; }
.minus { grid-area: 9 / 8; text-align: right; transform: none; }
.range { display: grid; grid-template: repeat(3, 59.920px) / repeat(3, 144.280px); margin-left: -1.500px; padding-left: 1.500px; }
.range span { padding-right: 9px; text-align: right; }
.yellow { grid-area: 1 / 2 / 4 / 5; background: #ff0; }
.yellow span { padding: 0 0 0 2px; text-align: center; }
.green { grid-area: 1 / 7 / 4 / 10; background: #00b050; }
.red { grid-area: 7 / 3 / 10 / 6; background: #f00; margin-top: -1.500px; padding-top: 1.500px; }
.selection { position: absolute; left: 286px; top: 357px; width: 148px; height: 65px; border: solid #0ff; border-width: 5px 6px 7px 5px; box-shadow: -2px -2px #000; }
.selection i { position: absolute; right: -9px; bottom: -10px; width: 13px; height: 13px; background: #0ff; border: solid #f00; border-width: 2px 0 0 2px; }

.vscroll { display: grid; grid-template-rows: 16px 39px 350px 194px 1fr; width: 27px; box-shadow: 2.500px 0 #fff; }
.vscroll > * { border-right: 2.500px solid #808080; }
.vsplit { margin-left: -8px; border-top: 3px solid #fff; border-bottom: 3px solid #000; background: #c0bfc0; }
.up { margin-left: -8px; padding: 12px 0 0 5px; border-left: 3px solid #fff; border-top: 3px solid #fff; border-bottom: 2.500px solid #000; background: #c0bfc0; clip-path: polygon(0 0, 100% 0, 100% 100%, 8px 100%, 8px 25px, 0 25px); }
.vthumb { border-top: 3px solid #fff; border-bottom: 2.500px solid #000; }
.dither { background: repeating-conic-gradient(#fff 0 25%, #c0bfc0 0 50%) 0 0 / 5px 5px; }
.vscroll .dither { border: 0; }
.down { padding-top: 9px; border-top: 2.500px solid #fff; border-bottom: 2.500px solid #000; }
.down svg { margin-left: -1px; }

.tabs { display: flex; height: 35px; border-left: 2.500px solid #000; }
.tab-nav { display: flex; width: 148px; border-top: 2px solid #808080; border-bottom: 2px solid #808080; }
.tab-nav b { width: 37px; padding: 5px 0 0 4px; border-left: 2.500px solid #fff; border-top: 2.500px solid #fff; border-right: 2px solid #808080; }
.tab-list { position: relative; display: grid; grid-template-columns: 133px 126px auto; width: 703px; padding-left: 21px; line-height: 37px; }
.tab-list .fit { position: relative; }
.tab-edges { position: absolute; left: 0; top: 0; }
.tab-one { font-weight: 700; transform: scaleX(0.979); }
.tab-two, .tab-three { transform: scaleX(0.962); }
.hscroll { display: grid; grid-template-columns: 14px 38px 423px 38px 38px 17px; width: 600px; height: 35px; margin-left: 1px; }
.hscroll i { border-top: 2.500px solid #fff; border-bottom: 2px solid #808080; }
.hscroll .hsplit, .hscroll .hbtn, .hscroll .hthumb, .hscroll .hend { border-left: 2.500px solid #fff; border-right: 2.500px solid #000; box-shadow: inset -2px 0 #808080; margin-right: 2px; }
.hscroll .hthumb { margin-right: 0; }
.hscroll .dither { border: 0; }
.hbtn svg { margin: 6px 0 0 8px; }
.gap { height: 8px; border-bottom: 2px solid #c0bfc0; background: linear-gradient(#c0bfc0 0 4px, #fff 4px); }

.drawing { height: 65px; line-height: 61px; grid-template-columns: 28px 72.500px 41.500px 49px 54px 20.500px 153px 37px 59px 49.500px 56.500px 57.500px 56.500px 55px 16px 55px 29px 55px 29.500px 54px 30px 56px 60px 57px 53.500px 52.500px auto; }
.d-draw { transform: scaleX(0.95); }
.d-auto { transform: scaleX(0.96); }
.bar-end { width: 2.500px; height: 62px; background: #808080; }
.status { display: grid; grid-template-columns: 488px 18px 89.500px 325px 73.500px 92px 79px 88.500px 77px 82px auto; height: 53px; padding-left: 16px; border-top: 2.500px solid #fff; line-height: 48px; }
.s-ready { transform: scaleX(1.121); }
.pane-end { width: 4px; height: 43px; border-left: 2px solid #808080; border-right: 2.500px solid #fff; }
.pane { height: 37px; margin: 4px 5px 0 0; border: 2px solid; border-color: #808080 #fff #fff #808080; }
.pane:nth-last-of-type(1) { width: 57px; }
.status svg { margin-top: 11px; }

.credit { margin: 14px 0 0 854px; color: #8b8b8b; font-size: 31px; line-height: 48px; }
.c-lect { transform: scaleX(1.021); }
```
